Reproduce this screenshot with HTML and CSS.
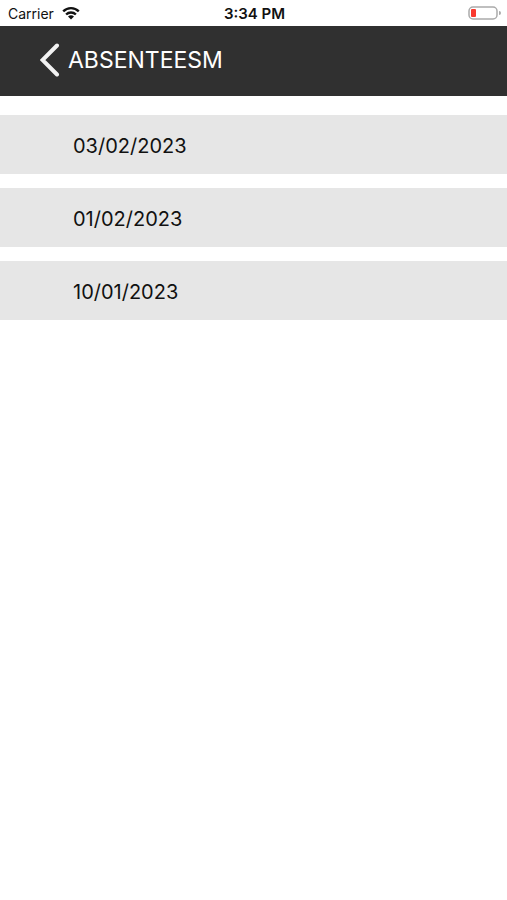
FILE: index.html
```html
<!DOCTYPE html>
<html lang="en">

<head>
    <meta charset="UTF-8">
    <meta name="viewport" content="width=device-width, initial-scale=1.0">
    <title>Absenteesm</title>
    <link rel="stylesheet" href="styles.css">
</head>

<body>
    <div class="status-bar">
        <div class="carrier">
            <span>Carrier</span>
            <svg class="wifi" viewBox="0 0 18 14" aria-hidden="true">
                <path d="M1.200 5.300a11.200 11.200 0 0 1 15.600 0M4.100 8.500a7 7 0 0 1 9.800 0" />
                <path class="dot" d="M9 13.500 6 10.600a4.300 4.300 0 0 1 6 0z" />
            </svg>
        </div>
        <span class="time">3:34 PM</span>
        <svg class="battery" viewBox="0 0 33 14" aria-hidden="true">
            <rect class="shell" x="1" y="1" width="28" height="12" rx="4" />
            <rect class="level" x="3" y="3" width="5" height="8" rx="1" />
            <path class="cap" d="M31 5a2 2 0 0 1 0 4z" />
        </svg>
    </div>
    <header class="header">
        <button class="back" type="button" aria-label="Back">
            <svg viewBox="0 0 20 34" aria-hidden="true">
                <path d="M17 2.500 2.500 17 17 31.500" />
            </svg>
        </button>
        <h1>ABSENTEESM</h1>
    </header>
    <main>
        <ul class="dates">
            <li><a href="#">03/02/2023</a></li>
            <li><a href="#">01/02/2023</a></li>
            <li><a href="#">10/01/2023</a></li>
        </ul>
    </main>
</body>

</html>
```
FILE: styles.css
```css
* {
    box-sizing: border-box;
}

body {
    margin: 0;
    background: #fff;
    color: #111;
    font-family: Inter, "Liberation Sans", sans-serif;
}

.status-bar {
    display: grid;
    grid-template-columns: 1fr auto 1fr;
    align-items: center;
    height: 26px;
    padding: 0 6px 0 8px;
    font-size: 14px;
}

.carrier {
    display: flex;
    align-items: center;
    gap: 8px;
}

.wifi {
    width: 18px;
    height: 14px;
    fill: none;
    stroke: #111;
    stroke-width: 2.4;
}

.wifi .dot {
    fill: #111;
    stroke: none;
}

.time {
    font-size: 15px;
    font-weight: 600;
}

.battery {
    width: 33px;
    height: 14px;
    justify-self: end;
}

.battery .shell {
    fill: none;
    stroke: #aaa;
    stroke-width: 1.5;
}

.battery .level {
    fill: #f9392f;
}

.battery .cap {
    fill: #aaa;
}

.header {
    display: flex;
    align-items: center;
    gap: 8px;
    height: 70px;
    padding: 0 40px 2px;
    background: #303030;
    color: #fff;
}

.back {
    width: 20px;
    height: 34px;
    padding: 0;
    border: none;
    background: none;
    cursor: pointer;
}

.back svg {
    display: block;
    width: 20px;
    height: 34px;
    fill: none;
    stroke: #f2f2f2;
    stroke-width: 4;
    stroke-linecap: round;
}

.header h1 {
    margin: 0;
    font-size: 23px;
    font-weight: 400;
}

.dates {
    display: flex;
    flex-direction: column;
    gap: 14px;
    margin: 0;
    padding: 19px 0;
    list-style: none;
}

.dates a {
    display: flex;
    align-items: center;
    height: 59px;
    padding: 2px 73px 0;
    background: #e6e6e6;
    color: #111;
    font-size: 20px;
    text-decoration: none;
}
```
